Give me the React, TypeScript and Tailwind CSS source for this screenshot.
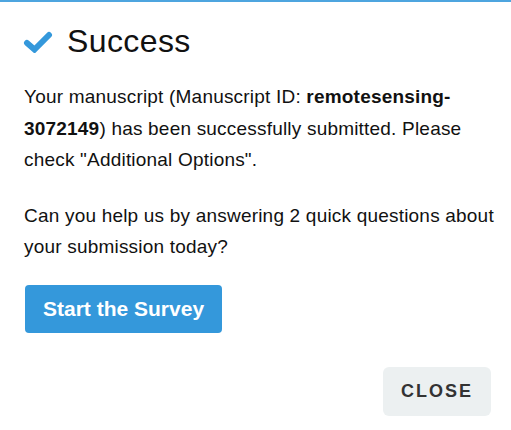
const CheckIcon = () => (
  <svg width="30" height="22" viewBox="0 0 30 22" className="shrink-0">
    <polyline
      points="4,12 11.5,18.5 26,4"
      fill="none"
      stroke="#3498db"
      strokeWidth="6"
      strokeLinecap="round"
      strokeLinejoin="miter"
    />
  </svg>
);

export default function App() {
  return (
    <div className="w-[511px] h-[430px] bg-white border-t-2 border-[#4ea5df] font-['Liberation_Sans',Arial,sans-serif] text-[#111]">
      <div className="flex items-center gap-[14px] pl-[23px] pt-[22px]">
        <CheckIcon />
        <h2 className="text-[32px] leading-[35px] font-normal tracking-[0.4px]">Success</h2>
      </div>

      <div className="pl-6 pr-3 pt-[22px] text-[19px] leading-[31.5px] tracking-[0.2px]">
        <p>
          Your manuscript (Manuscript ID: <b>remotesensing-3072149</b>) has been successfully submitted. Please
          check "Additional Options".
        </p>
        <p className="mt-6">Can you help us by answering 2 quick questions about your submission today?</p>
      </div>

      <div className="pl-[25px] pt-[22px]">
        <button className="h-12 px-[18px] rounded bg-[#3498db] text-white text-[21px] font-bold">
          Start the Survey
        </button>
      </div>

      <div className="flex justify-end pr-5 pt-[34px]">
        <button className="h-[49px] w-[108px] rounded-md bg-[#ecf0f1] text-[#333] text-[18px] font-bold tracking-[2px]">
          CLOSE
        </button>
      </div>
    </div>
  );
}
